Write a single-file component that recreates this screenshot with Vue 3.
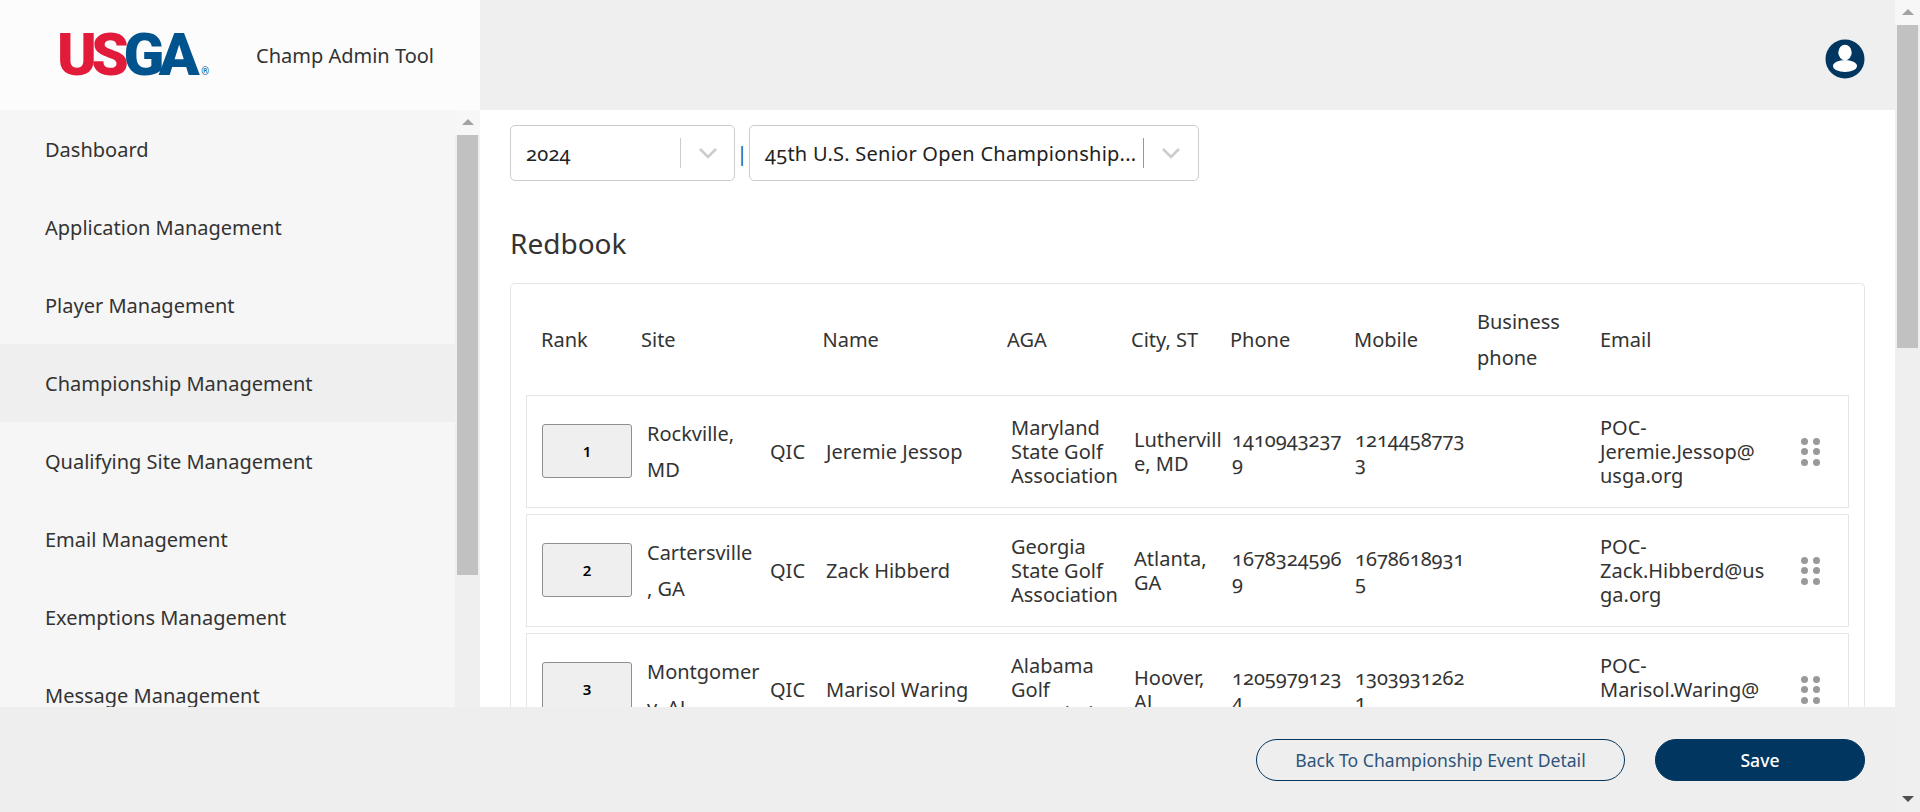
<script setup>
const nav = ['Dashboard','Application Management','Player Management','Championship Management','Qualifying Site Management','Email Management','Exemptions Management','Message Management']
const cols = ['Rank','Site','','Name','AGA','City, ST','Phone','Mobile','Business phone','Email']
const rows = [
 {rank:1,site:'Rockville,\nMD',name:'Jeremie Jessop',aga:'Maryland State Golf Association',city:'Lutherville, MD',phone:'14109432379',mobile:'12144587733',email:'POC-Jeremie.Jessop@usga.org'},
 {rank:2,site:'Cartersville\n, GA',name:'Zack Hibberd',aga:'Georgia State Golf Association',city:'Atlanta, GA',phone:'16783245969',mobile:'16786189315',email:'POC-Zack.Hibberd@usga.org'},
 {rank:3,site:'Montgomer\ny, AL',name:'Marisol Waring',aga:'Alabama Golf Association',city:'Hoover, AL',phone:'12059791234',mobile:'13039312621',email:'POC-Marisol.Waring@usga.org'},
]
</script>

<template>
  <div class="page">
    <div class="main">
      <div class="top">
        <div class="brand">
          <div class="logo"><span class="red">US</span><span class="blue">GA</span><span class="reg">®</span></div>
          <div class="tool">Champ Admin Tool</div>
        </div>
        <div class="topright">
          <svg class="user" width="40" height="40" viewBox="0 0 40 40">
            <circle cx="20" cy="20" r="19.5" fill="#00365f"/>
            <ellipse cx="20" cy="13.500" rx="6.700" ry="7.700" fill="#fff"/>
            <ellipse cx="20" cy="27" rx="12" ry="6" fill="#fff"/>
          </svg>
        </div>
      </div>
      <div class="mid">
        <aside class="side">
          <nav class="nav">
            <a v-for="n in nav" :key="n" :class="['item',{active:n==='Championship Management'}]">{{ n }}</a>
          </nav>
          <div class="bar sidebar">
            <i class="up"></i>
            <b class="thumb"></b>
          </div>
        </aside>
        <section class="content">
          <div class="selects">
            <div class="sel s1"><span class="val">2024</span><i class="sep"></i><svg class="chev" width="20" height="12" viewBox="0 0 20 12"><path d="M2 2l8 8 8-8" fill="none" stroke="#ccc" stroke-width="2.600"/></svg></div>
            <span class="pipe">|</span>
            <div class="sel s2"><span class="val">45th U.S. Senior Open Championship...</span><i class="sep dark"></i><svg class="chev" width="20" height="12" viewBox="0 0 20 12"><path d="M2 2l8 8 8-8" fill="none" stroke="#ccc" stroke-width="2.600"/></svg></div>
          </div>
          <h1>Redbook</h1>
          <div class="card">
            <div class="head">
              <div v-for="(c,i) in cols" :key="i" class="hc">{{ c }}</div>
            </div>
            <div v-for="r in rows" :key="r.rank" class="row">
              <div class="rk"><button class="rankbtn">{{ r.rank }}</button></div>
              <div class="c site">{{ r.site }}</div>
              <div class="c qic">QIC</div>
              <div class="c">{{ r.name }}</div>
              <div class="c">{{ r.aga }}</div>
              <div class="c">{{ r.city }}</div>
              <div class="c">{{ r.phone }}</div>
              <div class="c">{{ r.mobile }}</div>
              <div class="c"></div>
              <div class="c email">{{ r.email }}</div>
              <div class="dots"><i v-for="d in 6" :key="d"></i></div>
            </div>
          </div>
        </section>
      </div>
      <footer class="foot">
        <button class="btn ghost">Back To Championship Event Detail</button>
        <button class="btn solid">Save</button>
      </footer>
    </div>
    <div class="bar pagebar">
      <i class="up"></i>
      <b class="thumb"></b>
      <span class="fill"></span>
      <i class="down"></i>
    </div>
  </div>
</template>

<style>
html, body { margin: 0; padding: 0; overflow: hidden; }
</style>

<style scoped>
.page { display: flex; width: 1920px; height: 812px; overflow: hidden; font-family: "Noto Sans", sans-serif; font-size: 20px; color: #333; background: #fff; font-variant-numeric: oldstyle-nums; }
.main { width: 1895px; display: flex; flex-direction: column; }
.top { height: 110px; display: flex; background: #efefef; flex: none; }
.brand { width: 480px; background: #fcfcfc; display: flex; align-items: center; flex: none; }
.logo { width: 256px; box-sizing: border-box; padding-left: 57px; font-family: "Roboto", sans-serif; font-weight: 900; font-size: 60px; letter-spacing: -5.5px; line-height: 1; white-space: nowrap; }
.red { color: #e31b3b; }
.blue { color: #00538c; }
.reg { color: #00538c; font-size: 10px; font-weight: 400; letter-spacing: 0; margin-left: 7px; }
.tool { font-size: 20px; }
.topright { flex: 1; display: flex; justify-content: flex-end; align-items: center; padding: 7px 30px 0 0; box-sizing: border-box; }
.user { display: block; }
.mid { flex: 1; min-height: 0; display: flex; }
.side { width: 480px; flex: none; display: flex; background: #f6f6f6; overflow: hidden; }
.nav { flex: 1; display: flex; flex-direction: column; }
.item { height: 78px; flex: none; display: flex; align-items: center; padding-left: 45px; }
.item.active { background: #efefef; }
.bar { display: flex; flex-direction: column; align-items: center; flex: none; width: 25px; background: #efefef; }
.thumb { display: block; width: 21px; background: #c1c1c1; flex: none; }
.sidebar .thumb { height: 440px; }
.pagebar .thumb { height: 323px; }
.fill { flex: 1; }
.up, .down { display: block; height: 25px; width: 100%; position: relative; flex: none; }
.up { background: #f7f7f7; }
.up::after, .down::after { content: ""; position: absolute; left: 50%; top: 9px; margin-left: -6px; border-left: 6px solid transparent; border-right: 6px solid transparent; }
.up::after { border-bottom: 6px solid #a3a3a3; }
.down::after { border-top: 6px solid #505050; }
.content { flex: 1; min-width: 0; padding: 15px 30px 0; overflow: hidden; box-sizing: border-box; }
.selects { display: flex; align-items: center; height: 56px; }
.sel { height: 56px; box-sizing: border-box; border: 1px solid #ccc; border-radius: 5px; display: flex; align-items: center; position: relative; flex: none; }
.s1 { width: 225px; }
.s2 { width: 450px; }
.val { padding-left: 15px; color: #222; white-space: nowrap; letter-spacing: .25px; box-sizing: border-box; overflow: hidden; }
.s1 .val { width: 169px; }
.s2 .val { width: 393px; }
.sep { width: 1px; height: 30px; background: #ccc; flex: none; }
.sep.dark { background: #999; }
.chev { margin-left: 17px; flex: none; }
.pipe { width: 14px; text-align: center; color: #1c5a94; flex: none; }
h1 { margin: 44px 0 0; font-weight: 400; font-size: 28px; line-height: 36px; color: #333; }
.card { margin-top: 22px; border: 1px solid #e6e6e6; border-bottom: 0; border-radius: 5px 5px 0 0; padding: 0 15px; height: 600px; box-sizing: border-box; }
.head { display: grid; grid-template-columns: 115px 123px 58.5px 184.500px 124px 99px 124px 123px 123px 1fr; height: 111px; align-items: center; }
.row { display: grid; grid-template-columns: 120px 123px 56px 185px 123px 98px 123px 123px 122px 190px 1fr; border: 1px solid #e6e6e6; height: 113px; box-sizing: border-box; margin-bottom: 6px; align-items: center; }
.hc { line-height: 36px; padding-right: 10px; }
.head .hc:nth-child(1) { padding-left: 15px; }
.c { line-height: 24px; overflow-wrap: anywhere; padding-right: 4px; }
.site { line-height: 36px; white-space: pre-line; }
.email { padding-right: 25px; }
.rk { padding-left: 15px; }
.rankbtn { width: 90px; height: 54px; box-sizing: border-box; background: #efefef; border: 1px solid #8f8f8f; border-radius: 3px; font-family: "Noto Sans", sans-serif; font-size: 15px; font-weight: 600; color: #000; padding: 0; display: block; position: relative; top: -1px; }
.dots { display: grid; grid-template-columns: 7px 7px; gap: 3.5px 5px; margin-left: 10.5px; }
.dots i { display: block; width: 7px; height: 7px; border-radius: 50%; background: #999; }
.foot { height: 105px; flex: none; background: #eee; display: flex; justify-content: flex-end; gap: 30px; padding: 32px 30px 0 0; box-sizing: border-box; position: relative; z-index: 2; }
.btn { height: 42px; border-radius: 21px; font-family: "Noto Sans", sans-serif; font-size: 17.6px; box-sizing: border-box; padding: 0; }
.ghost { width: 369px; background: transparent; border: 1px solid #00365f; color: #2f5578; }
.solid { width: 210px; background: #00365f; border: 1px solid #00365f; color: #fff; font-weight: 500; }
</style>
